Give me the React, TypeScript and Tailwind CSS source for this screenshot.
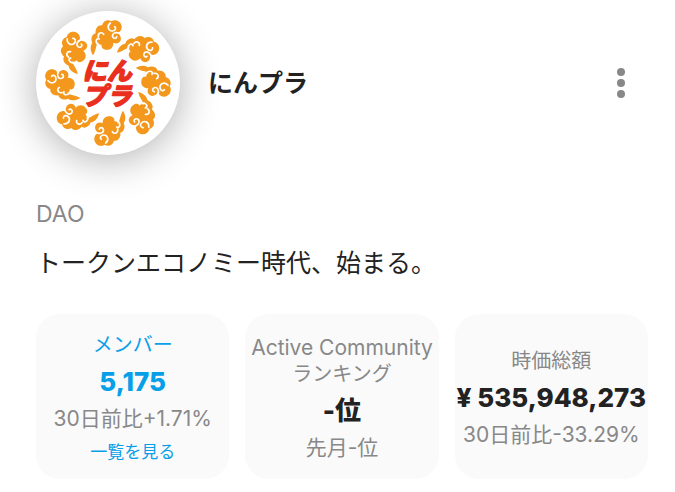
import type { ReactNode } from "react";

const CLOUD_ANGLES = [0, 45, 90, 135, 180, 225, 270, 315];

function Cloud({ angle }: { angle: number }) {
  return (
    <g transform={`rotate(${angle} 216 216)`}>
      <path
        d="M171 133C162 119 162 105 169 96C163 84 168 69 179 67C177 52 187 41 198 43C202 29 216 24 226 31C238 22 255 31 257 45C258 58 250 66 241 65C252 68 258 81 253 90C248 98 239 99 232 95C233 108 223 118 211 116C201 116 195 109 197 101C190 102 186 98 187 93C179 103 181 118 171 133Z"
        fill="#f3981d"
      />
      <g fill="none" stroke="#fff" strokeWidth="5" strokeLinecap="round">
        <path d="M223 36C210 47 219 61 230 60C239 59 241 51 236 47" />
        <path d="M249 67C239 61 227 68 230 77C233 85 242 83 242 77" />
        <path d="M188 103C177 95 179 79 190 84M187 78C185 66 197 61 203 70" />
      </g>
    </g>
  );
}

function Logo() {
  return (
    <svg viewBox="0 0 432 432" role="img" aria-label="にんプラ" className="size-full">
      {CLOUD_ANGLES.map((angle) => (
        <Cloud key={angle} angle={angle} />
      ))}
      <text
        fill="#e9301f"
        stroke="#e9301f"
        strokeWidth="4"
        strokeLinejoin="round"
        fontSize="74"
        fontWeight="900"
        fontStyle="italic"
        textAnchor="middle"
      >
        <tspan x="213" y="206">にん</tspan>
        <tspan x="213" y="282">プラ</tspan>
      </text>
    </svg>
  );
}

interface StatCardProps {
  label: ReactNode;
  value: string;
  note: string;
  highlight?: boolean;
  children?: ReactNode;
}

function StatCard({ label, value, note, highlight = false, children }: StatCardProps) {
  return (
    <section className="flex min-h-[165px] min-w-0 flex-col items-center justify-center rounded-3xl bg-[#fafafa] pt-0.5 text-center whitespace-nowrap">
      <h2 className={`text-[20px] leading-[26px] ${highlight ? "text-[#079fe8]" : "text-[#888]"}`}>{label}</h2>
      <p className={`text-[26px] leading-[48px] font-extrabold ${highlight ? "text-[#079fe8]" : "text-[#222]"}`}>{value}</p>
      <p className="text-[21px] leading-[26px] text-[#888]">{note}</p>
      {children}
    </section>
  );
}

export default function App() {
  return (
    <main className="bg-white pt-[11px] pr-[27px] pb-3 pl-9 font-[Inter,'Noto_Sans_CJK_JP',sans-serif] text-[#222]">
      <header className="flex items-center">
        <div className="size-36 shrink-0 rounded-full bg-white shadow-[0_4px_40px_rgba(0,0,0,0.32)]">
          <Logo />
        </div>
        <h1 className="ml-7 text-[25px] leading-9 font-bold">にんプラ</h1>
        <button type="button" aria-label="メニュー" className="ml-auto flex h-11 w-[54px] items-center justify-center">
          <svg viewBox="0 0 8 30" className="h-[30px] w-2" fill="#888">
            <circle cx="4" cy="4" r="4" />
            <circle cx="4" cy="15" r="4" />
            <circle cx="4" cy="26" r="4" />
          </svg>
        </button>
      </header>

      <p className="mt-11 text-[23px] leading-[30px] text-[#888]">DAO</p>
      <p className="mt-4 text-[25px] leading-9">トークンエコノミー時代、始まる。</p>

      <div className="mt-[33px] grid grid-cols-3 gap-4">
        <StatCard label="メンバー" value="5,175" note="30日前比+1.71%" highlight>
          <a href="#members" className="pt-2 text-[17px] leading-6 text-[#079fe8]">一覧を見る</a>
        </StatCard>
        <StatCard
          label={
            <>
              <span className="text-[21px]">Active Community</span>
              <br />
              ランキング
            </>
          }
          value="-位"
          note="先月-位"
        />
        <StatCard label="時価総額" value="¥ 535,948,273" note="30日前比-33.29%" />
      </div>
    </main>
  );
}
